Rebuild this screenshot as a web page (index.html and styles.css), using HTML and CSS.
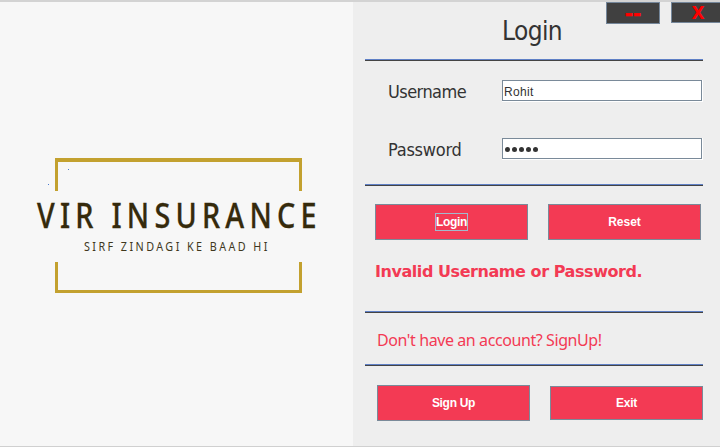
FILE: index.html
```html
<!DOCTYPE html>
<html lang="en">
<head>
<meta charset="utf-8">
<title>Login</title>
<link rel="stylesheet" href="styles.css">
</head>
<body>
<main class="window">
  <section class="brand">
    <svg class="logo" width="353" height="150" viewBox="0 150 353 150">
      <g fill="none" stroke="#c3a12f">
        <path stroke-width="4" d="M55 160H302"/>
        <path stroke-width="3" d="M56.500 158V191M300.500 158V191M56.500 262V293M300.500 262V293M55 291.500H302"/>
      </g>
      <path fill="#4b7bd0" d="M68 169h1v1h-1zM48 184h1v1h-1z"/>
      <text class="logo-name" transform="translate(37 228) scale(.86 1)" textLength="325">VIR INSURANCE</text>
      <text class="logo-tag" transform="translate(84 251) scale(.83 1)" textLength="221">SIRF ZINDAGI KE BAAD HI</text>
    </svg>
  </section>
  <section class="panel">
    <nav class="controls">
      <button class="control minimize">--</button>
      <button class="control close">X</button>
    </nav>
    <h1 class="title">Login</h1>
    <hr class="rule">
    <form class="fields">
      <label class="label" for="user">Username</label>
      <div class="field"><input id="user" class="input" type="text" value="Rohit"></div>
      <label class="label password" for="pass">Password</label>
      <div class="field"><div id="pass" class="dots"><i></i><i></i><i></i><i></i><i></i></div></div>
    </form>
    <hr class="rule">
    <div class="actions">
      <button class="button"><span class="focused">Login</span></button>
      <button class="button"><span>Reset</span></button>
    </div>
    <p class="error">Invalid Username or Password.</p>
    <hr class="rule">
    <p class="prompt">Don't have an account? SignUp!</p>
    <hr class="rule">
    <div class="actions secondary">
      <button class="button"><span>Sign Up</span></button>
      <button class="button short"><span>Exit</span></button>
    </div>
  </section>
</main>
</body>
</html>
```
FILE: styles.css
```css
* { box-sizing: border-box; margin: 0; padding: 0; }
body { overflow: hidden; }
.window {
  display: flex;
  width: 720px;
  height: 447px;
  border-top: 2px solid #d3d3d3;
  border-bottom: 1px solid #d0d0d0;
  background: #eee;
  color: #333;
  font-family: "DejaVu Sans Condensed", "DejaVu Sans", sans-serif;
  font-stretch: condensed;
}
.brand { width: 353px; padding-top: 148px; background: #f7f7f7; }
.logo { display: block; }
.logo-name { font: 500 33.500px "Noto Sans", sans-serif; fill: #352a0c; stroke: #352a0c; stroke-width: .3px; }
.logo-tag { font: 400 13px "Noto Sans", sans-serif; fill: #40371d; }
.panel { position: relative; width: 367px; padding-left: 12px; }
.controls { position: absolute; top: 0; left: 253px; display: flex; align-items: flex-start; gap: 11px; }
.control {
  width: 54px;
  height: 22px;
  border: 1px solid #74869a;
  background: #404040;
  color: #f00;
  font: bold 17px/20px "DejaVu Sans", sans-serif;
}
.minimize { font-size: 20px; line-height: 20px; -webkit-text-stroke: .6px #f00; }
.close { height: 21px; }
.title { height: 57px; padding: 13px 0 0 137px; font-size: 26px; font-weight: 400; line-height: 32px; letter-spacing: -.6px; }
.rule { width: 338px; height: 2px; border: 0; border-top: 1px solid #5f80c6; background: #444; }
.fields {
  display: grid;
  grid-template-columns: 114px 201px;
  row-gap: 36px;
  height: 123px;
  padding: 19px 0 0 23px;
  align-content: start;
}
.label { height: 22px; font-size: 18px; line-height: 24px; letter-spacing: -.55px; }
.password { letter-spacing: -.25px; }
.field { height: 22px; padding: 0 1px 1px 0; background: #fff; }
.input, .dots {
  display: block;
  width: 200px;
  height: 21px;
  border: 1px solid #7a8a99;
  background: #fff;
  outline: 0;
}
.input { padding: 2px 0 0 1px; color: #333; font: 12px "Liberation Sans", sans-serif; letter-spacing: .3px; }
.dots { display: flex; align-items: center; gap: 2px; padding: 2px 0 0 2px; }
.dots i { width: 5px; height: 5px; border-radius: 50%; background: #333; }
.actions { display: flex; gap: 20px; padding: 18px 0 0 10px; }
.button {
  width: 153px;
  height: 36px;
  border: 1px solid #7a8a99;
  background: #f33a54;
  color: #fff;
  font: bold 12px/16px "Liberation Sans", sans-serif;
}
.focused { display: inline-block; height: 18px; border: 1px solid #a3b8cc; letter-spacing: -.3px; }
.error { height: 71px; padding: 20px 0 0 10px; color: #f33a54; font: bold 16px/24px "DejaVu Sans", sans-serif; letter-spacing: -.44px; white-space: nowrap; }
.prompt { height: 51px; padding: 15px 0 0 12px; color: #f33a54; font: 16px/24px "Noto Sans", sans-serif; letter-spacing: -.41px; white-space: nowrap; }
.secondary { padding: 19px 0 0 12px; }
.secondary .button { letter-spacing: -.3px; }
.short { height: 34px; margin-top: 1px; }
```
